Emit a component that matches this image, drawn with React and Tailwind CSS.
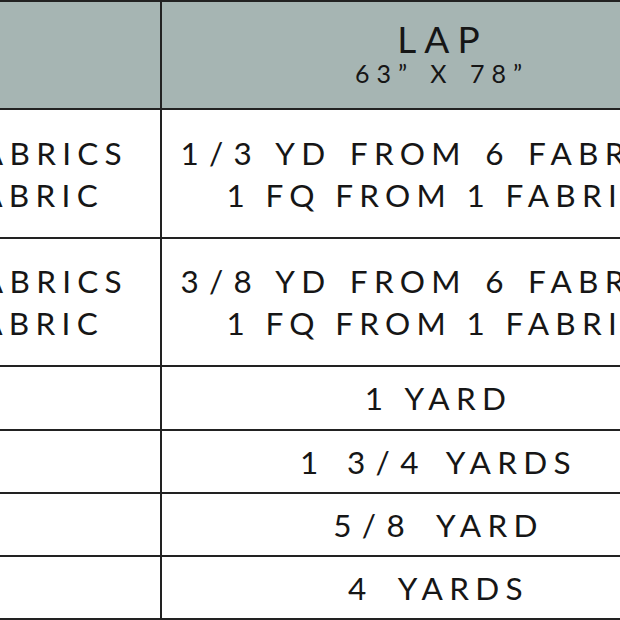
const rows = [
  { left: ["1 FQ FROM 12 FABRICS", "1 FQ FROM 1 FABRIC"], right: ["1/3 YD FROM 6 FABRICS", "1 FQ FROM 1 FABRIC"], h: "h-[129px]", ws: "[word-spacing:4px]" },
  { left: ["1 FQ FROM 12 FABRICS", "1 FQ FROM 1 FABRIC"], right: ["3/8 YD FROM 6 FABRICS", "1 FQ FROM 1 FABRIC"], h: "h-[128px]", ws: "[word-spacing:4px]" },
  { left: ["1/2 YD"], right: ["1 YARD"], h: "h-[64px]", ws: "[word-spacing:2px]" },
  { left: ["1 YD"], right: ["1 3/4 YARDS"], h: "h-[63px]", ws: "[word-spacing:8px]" },
  { left: ["1/2 YD"], right: ["5/8 YARD"], h: "h-[63px]", ws: "[word-spacing:12px]" },
  { left: ["3 YDS"], right: ["4 YARDS"], h: "h-[63px]", ws: "[word-spacing:12px]" },
]

// the fractions in the print have a roomier slash
const withSlash = (text) =>
  text.split("/").map((part, i) => (
    <span key={i}>
      {i > 0 && <span className="mx-[4px]">/</span>}
      {part}
    </span>
  ))

const Cell = ({ lines, tightSecond = false, className = "" }) => (
  <div className={`flex flex-col items-center justify-center text-center ${className}`}>
    {lines.map((l, i) => (
      <div key={i} className={`whitespace-pre leading-[42px] ${tightSecond && i > 0 ? "[word-spacing:0px]" : ""}`}>
        {withSlash(l)}
      </div>
    ))}
  </div>
)

export default function App() {
  return (
    <div
      className="w-[620px] h-[620px] overflow-hidden bg-white text-[#161616]"
      style={{ fontFamily: "Lato, 'Noto Sans', sans-serif" }}
    >
      <div className="ml-[-392px] w-[1200px] border-t-2 border-[#222]">
        {/* header */}
        <div className="flex h-[108px] bg-[#a6b5b3] border-b-2 border-[#222]">
          <div className="w-[554px] border-r-2 border-[#222] flex flex-col items-center justify-center">
            <div className="text-[37px] tracking-[0.2em] leading-[42px]">CRIB</div>
            <div className="text-[24px] tracking-[0.25em]">45” X 60”</div>
          </div>
          <div className="w-[553px] flex flex-col items-center justify-center pb-[4px]">
            <div className="text-[37px] tracking-[0.22em] leading-[40px] pl-[0.22em]">LAP</div>
            <div className="text-[25px] tracking-[0.28em] leading-[28px] pl-[0.28em] [word-spacing:3px]">63” X 78”</div>
          </div>
        </div>
        {rows.map((r, i) => (
          <div key={i} className={`flex ${r.h} border-b-2 border-[#222] text-[31.5px] tracking-[0.2em] ${r.ws}`}>
            <Cell lines={r.left} className="w-[554px] border-r-2 border-[#222]" />
            <Cell lines={r.right} tightSecond className="w-[553px]" />
          </div>
        ))}
      </div>
    </div>
  )
}
